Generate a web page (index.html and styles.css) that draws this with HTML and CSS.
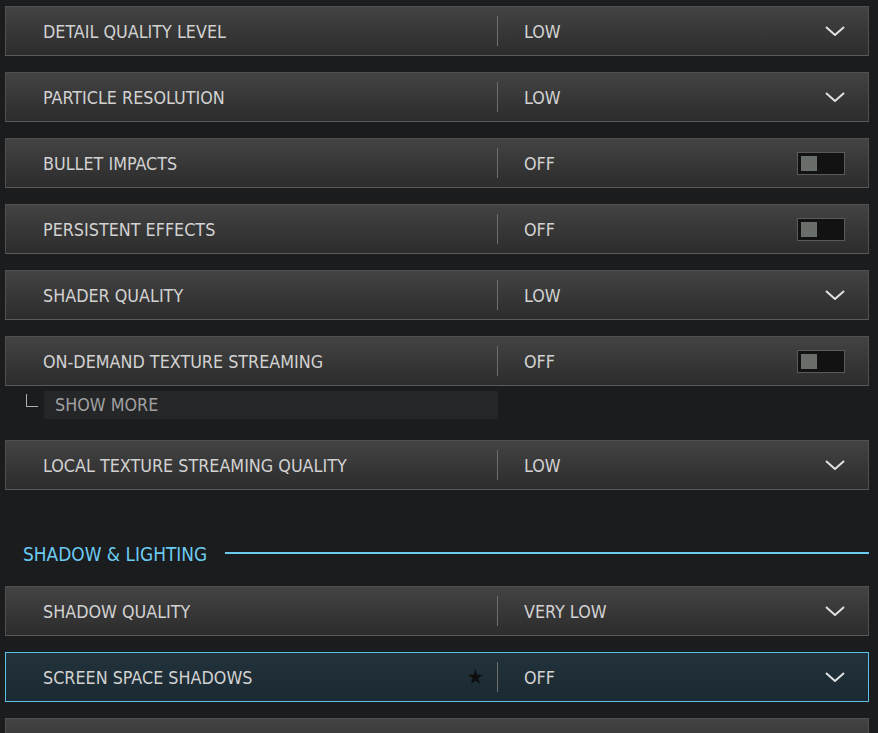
FILE: index.html
```html
<!DOCTYPE html>
<html lang="en">
<head>
    <meta charset="UTF-8">
    <title>Graphics Settings</title>
    <link rel="stylesheet" href="styles.css">
</head>
<body>
    <div class="settings">
        <div class="row">
            <div class="label">DETAIL QUALITY LEVEL</div>
            <div class="value">LOW</div>
            <svg class="chevron" viewBox="0 0 20 10"><path d="M1 1 L10 9 L19 1"/></svg>
        </div>
        <div class="row">
            <div class="label">PARTICLE RESOLUTION</div>
            <div class="value">LOW</div>
            <svg class="chevron" viewBox="0 0 20 10"><path d="M1 1 L10 9 L19 1"/></svg>
        </div>
        <div class="row">
            <div class="label">BULLET IMPACTS</div>
            <div class="value">OFF</div>
            <div class="toggle"><span class="knob"></span></div>
        </div>
        <div class="row">
            <div class="label">PERSISTENT EFFECTS</div>
            <div class="value">OFF</div>
            <div class="toggle"><span class="knob"></span></div>
        </div>
        <div class="row">
            <div class="label">SHADER QUALITY</div>
            <div class="value">LOW</div>
            <svg class="chevron" viewBox="0 0 20 10"><path d="M1 1 L10 9 L19 1"/></svg>
        </div>
        <div class="row">
            <div class="label">ON-DEMAND TEXTURE STREAMING</div>
            <div class="value">OFF</div>
            <div class="toggle"><span class="knob"></span></div>
        </div>
        <div class="show-more">
            <span class="corner"></span>
            <div class="show-more-btn">SHOW MORE</div>
        </div>
        <div class="row">
            <div class="label">LOCAL TEXTURE STREAMING QUALITY</div>
            <div class="value">LOW</div>
            <svg class="chevron" viewBox="0 0 20 10"><path d="M1 1 L10 9 L19 1"/></svg>
        </div>

        <div class="section-title">
            <span>SHADOW &amp; LIGHTING</span>
            <span class="section-line"></span>
        </div>

        <div class="row">
            <div class="label">SHADOW QUALITY</div>
            <div class="value">VERY LOW</div>
            <svg class="chevron" viewBox="0 0 20 10"><path d="M1 1 L10 9 L19 1"/></svg>
        </div>
        <div class="row selected">
            <div class="label">SCREEN SPACE SHADOWS <span class="star">★</span></div>
            <div class="value">OFF</div>
            <svg class="chevron" viewBox="0 0 20 10"><path d="M1 1 L10 9 L19 1"/></svg>
        </div>
        <div class="row"></div>
    </div>
</body>
</html>
```

FILE: styles.css
```css
body {
    margin: 0;
    background-color: #1a1c1e;
    font-family: "DejaVu Sans Condensed", "DejaVu Sans", sans-serif;
    overflow: hidden;
}

.settings {
    padding: 6px 9px 0 5px;
    display: flex;
    flex-direction: column;
    gap: 16px;
}

.row {
    display: flex;
    align-items: center;
    height: 48px;
    flex-shrink: 0;
    border: 1px solid #505050;
    border-bottom-color: #5a5a5a;
    background: linear-gradient(to bottom, #434343, #2c2c2c);
    color: #d2d2d2;
    font-size: 17.8px;
}

.label {
    width: 453px;
    padding-left: 37px;
    display: flex;
    align-items: center;
    justify-content: space-between;
    padding-right: 1px;
    height: 30px;
    border-right: 1px solid #6e6e6e;
}

.value {
    flex: 1;
    padding-left: 26px;
}

.chevron {
    width: 20px;
    height: 10px;
    margin-right: 23px;
    fill: none;
    stroke: #e2e2e2;
    stroke-width: 2;
}

.toggle {
    width: 43px;
    height: 21px;
    margin-right: 23px;
    border: 1px solid #5a5a5a;
    background-color: #121212;
    display: flex;
    align-items: center;
    padding-left: 3px;
}

.knob {
    width: 16px;
    height: 15px;
    background-color: #6a6e6b;
}

.show-more {
    display: flex;
    align-items: center;
    height: 28px;
    margin-top: -11px;
    margin-bottom: 5px;
}

.corner {
    width: 11px;
    height: 12px;
    margin-left: 21px;
    margin-right: 6px;
    margin-top: -10px;
    border-left: 1px solid #b0b0b0;
    border-bottom: 1px solid #b0b0b0;
}

.show-more-btn {
    width: 443px;
    height: 28px;
    line-height: 28px;
    padding-left: 11px;
    background-color: #252628;
    color: #a0a0a0;
    font-size: 17.8px;
}

.section-title {
    display: flex;
    align-items: center;
    margin-top: 33px;
    margin-bottom: 1px;
    padding-left: 18px;
    height: 30px;
    color: #6ccbf0;
    font-size: 18.9px;
}

.section-line {
    flex: 1;
    height: 2px;
    margin-left: 18px;
    margin-top: -2px;
    background-color: #6ccbf0;
}

.selected {
    border-color: #5cbfe6;
    background: linear-gradient(to bottom, #22323b, #1b2a32);
}

.star {
    color: #0e0e0e;
    font-size: 21px;
    margin-right: 12px;
}
```
